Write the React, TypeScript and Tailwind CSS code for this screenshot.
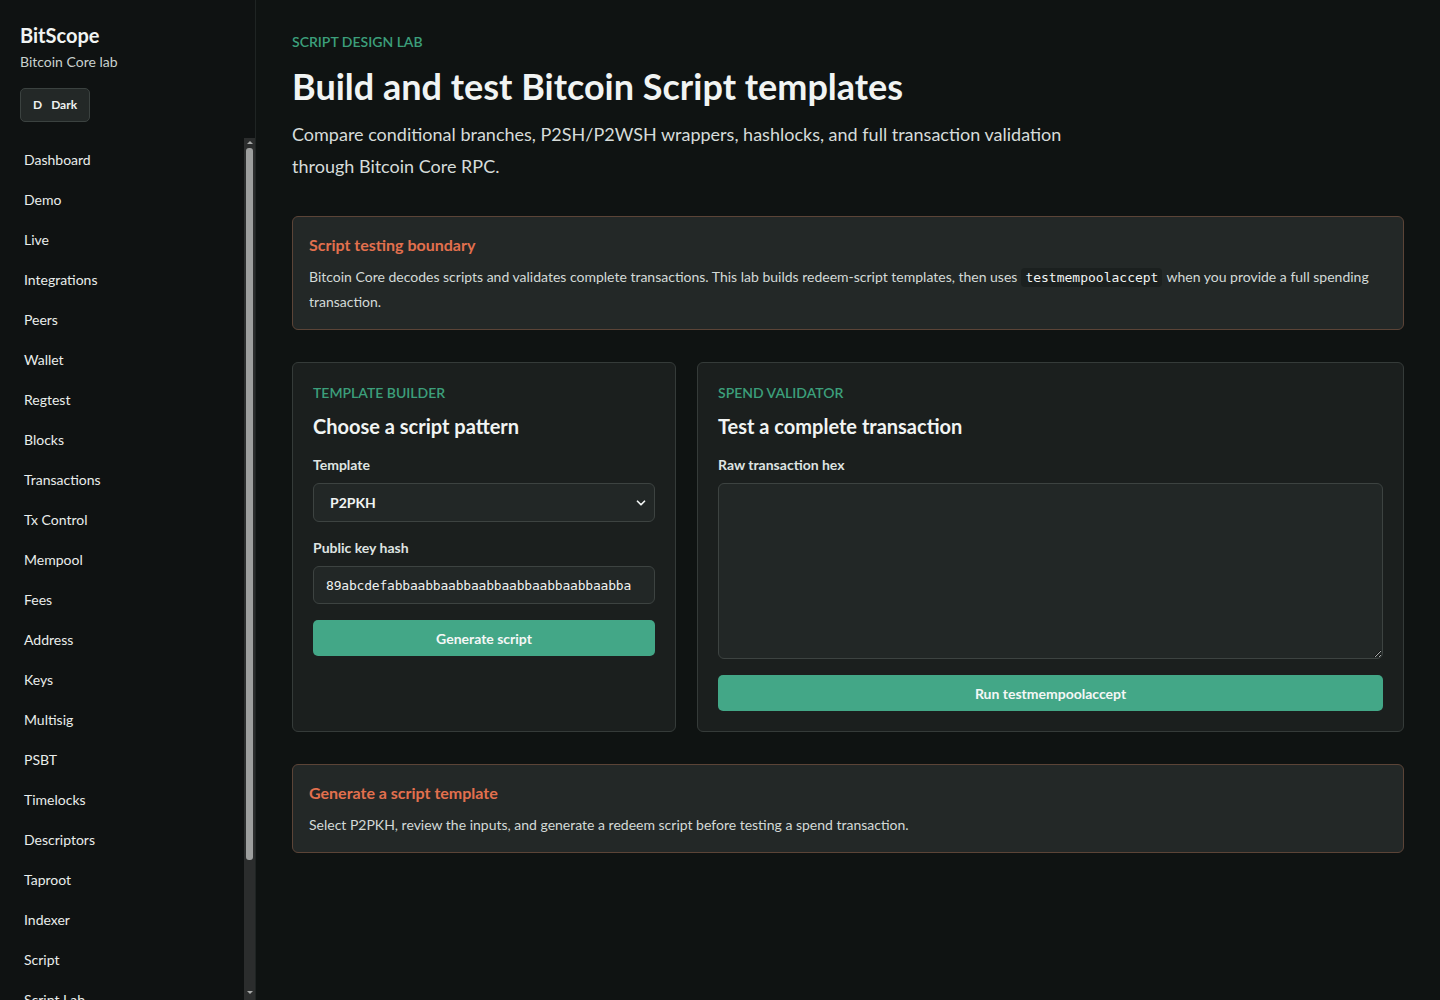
import { ChevronDown } from "lucide-react";

const NAV_ITEMS = [
  "Dashboard",
  "Demo",
  "Live",
  "Integrations",
  "Peers",
  "Wallet",
  "Regtest",
  "Blocks",
  "Transactions",
  "Tx Control",
  "Mempool",
  "Fees",
  "Address",
  "Keys",
  "Multisig",
  "PSBT",
  "Timelocks",
  "Descriptors",
  "Taproot",
  "Indexer",
  "Script",
  "Script Lab",
  "Network",
  "Settings",
];

// Thin classic scrollbar drawn next to the nav list
function ScrollTrack() {
  return (
    <div className="w-[11px] shrink-0 flex flex-col items-center bg-[#2b2d2d] mt-[-2px]">
      <span className="mt-[3px] h-0 w-0 border-x-[3px] border-x-transparent border-b-[3px] border-b-[#a7a9a8]" />
      <span className="mt-[4px] w-[7px] h-[712px] rounded-[3px] bg-[#9d9f9e]" />
      <span className="mt-auto mb-[6px] h-0 w-0 border-x-[3px] border-x-transparent border-t-[3px] border-t-[#a7a9a8]" />
    </div>
  );
}

function Sidebar() {
  return (
    <aside className="w-[256px] shrink-0 h-screen flex flex-col bg-[#0f1212] border-r border-[#1f2423]">
      <div className="px-5 pt-[22px]">
        <div className="text-[20px] leading-[26px] font-bold text-[#f1f4f3]">BitScope</div>
        <div className="text-[14px] leading-5 mt-[4px] text-[#c9d1ce]">Bitcoin Core lab</div>
        <button className="mt-[16px] h-[34px] px-3 flex items-center gap-[9px] rounded-[5px] bg-[#232827] border border-[#3b4240] text-[12px] font-bold text-[#eef1f0]">
          <span>D</span>
          <span>Dark</span>
        </button>
      </div>
      <div className="mt-[18px] flex-1 min-h-0 flex">
        <nav className="flex-1 overflow-hidden pl-[12px]">
          <ul>
            {NAV_ITEMS.map((item) => (
              <li key={item}>
                <a className="block h-10 px-3 leading-10 text-[14px] text-[#e9edeb]" href="#">
                  {item}
                </a>
              </li>
            ))}
          </ul>
        </nav>
        <ScrollTrack />
      </div>
    </aside>
  );
}

function Callout({ title, children }: { title: string; children: React.ReactNode }) {
  return (
    <div className="rounded-[6px] border border-[#5b4437] bg-[#232827] px-4 pt-[16px] pb-[15px]">
      <h3 className="text-[16px] leading-[24px] font-bold text-[#e2704e]">{title}</h3>
      <p className="mt-[8px] text-[14px] leading-[24px] text-[#d3dad7]">{children}</p>
    </div>
  );
}

function Label({ children }: { children: React.ReactNode }) {
  return <div className="text-[14px] leading-5 font-bold text-[#dfe4e2] mb-[8px]">{children}</div>;
}

const mono = { fontFamily: '"DejaVu Sans Mono", "Liberation Mono", monospace' };

export default function App() {
  return (
    <div
      className="flex h-screen overflow-hidden bg-[#0f1312] text-[#e8ecea]"
      style={{ fontFamily: 'Lato, "Noto Sans", sans-serif' }}
    >
      <Sidebar />

      <main className="flex-1 overflow-y-auto px-9 pt-[32px] pb-10">
        {/* Page header */}
        <div className="text-[14px] leading-5 font-semibold text-[#3c9f7b] uppercase">Script design lab</div>
        <h1 className="mt-[10px] text-[36px] leading-[48px] font-bold text-[#f1f4f3]">
          Build and test Bitcoin Script templates
        </h1>
        <p className="mt-[8px] max-w-[790px] text-[18px] leading-[32px] text-[#d6dcda]">
          Compare conditional branches, P2SH/P2WSH wrappers, hashlocks, and full transaction validation through
          Bitcoin Core RPC.
        </p>

        <div className="mt-[34px]">
          <Callout title="Script testing boundary">
            Bitcoin Core decodes scripts and validates complete transactions. This lab builds redeem-script templates,
            then uses
            <code className="mx-[4px] px-[4px] py-[2px] rounded-[4px] bg-[#1b201f] text-[13px] text-[#f1f4f3]" style={mono}>
              testmempoolaccept
            </code>
            when you provide a full spending transaction.
          </Callout>
        </div>

        {/* Builder + validator */}
        <div className="mt-[32px] grid grid-cols-[384px_1fr] gap-[21px]">
          <section className="rounded-[6px] border border-[#353b39] bg-[#1b1f1e] p-5">
            <div className="text-[14px] leading-5 font-semibold text-[#3c9f7b] uppercase">Template builder</div>
            <h2 className="mt-[9px] text-[20px] leading-[28px] font-bold text-[#f1f4f3]">Choose a script pattern</h2>
            <div className="mt-[15px]">
              <Label>Template</Label>
              <div className="relative">
                <select className="w-full h-[39px] appearance-none rounded-[6px] border border-[#3d4341] bg-[#222726] pl-4 text-[14px] font-bold text-[#f1f4f3] outline-none">
                  <option>P2PKH</option>
                  <option>P2SH multisig</option>
                  <option>Hashlock</option>
                </select>
                <ChevronDown
                  size={14}
                  strokeWidth={3}
                  className="pointer-events-none absolute right-[7px] top-1/2 -translate-y-1/2 text-[#f1f4f3]"
                />
              </div>
            </div>
            <div className="mt-[16px]">
              <Label>Public key hash</Label>
              <input
                className="w-full h-[38px] rounded-[6px] border border-[#3d4341] bg-[#222726] px-3 text-[13px] tracking-[-0.2px] text-[#eef1f0] outline-none"
                style={mono}
                defaultValue="89abcdefabbaabbaabbaabbaabbaabbaabbaabba"
              />
            </div>
            <button className="mt-[16px] w-full h-[36px] rounded-[5px] bg-[#43a787] text-[14px] font-bold text-[#f4f7f6]">
              Generate script
            </button>
          </section>

          <section className="rounded-[6px] border border-[#353b39] bg-[#1b1f1e] p-5">
            <div className="text-[14px] leading-5 font-semibold text-[#3c9f7b] uppercase">Spend validator</div>
            <h2 className="mt-[9px] text-[20px] leading-[28px] font-bold text-[#f1f4f3]">Test a complete transaction</h2>
            <div className="mt-[15px]">
              <Label>Raw transaction hex</Label>
              <textarea className="block w-full h-[176px] rounded-[6px] border border-[#3d4341] bg-[#222726] p-3 text-[13px] text-[#eef1f0] outline-none" />
            </div>
            <button className="mt-[16px] w-full h-[36px] rounded-[5px] bg-[#43a787] text-[14px] font-bold text-[#f4f7f6]">
              Run testmempoolaccept
            </button>
          </section>
        </div>

        <div className="mt-[32px]">
          <Callout title="Generate a script template">
            Select P2PKH, review the inputs, and generate a redeem script before testing a spend transaction.
          </Callout>
        </div>
      </main>
    </div>
  );
}
